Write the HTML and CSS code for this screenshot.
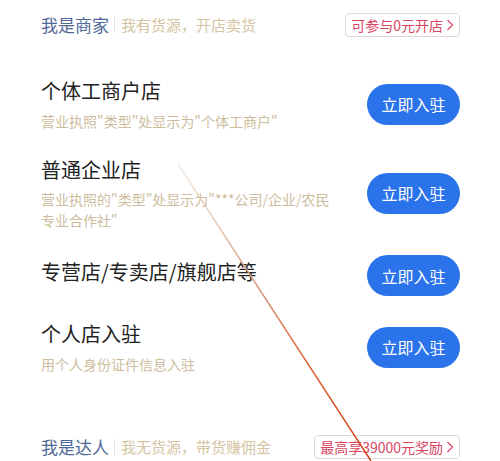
FILE: index.html
```html
<!DOCTYPE html>
<html lang="zh-CN">
<head>
<meta charset="utf-8">
<title>入驻</title>
<link rel="stylesheet" href="styles.css">
</head>
<body>
<div class="page">
  <div class="section-head">
    <div class="head-left">
      <span class="head-title">我是商家</span>
      <span class="head-sep"></span>
      <span class="head-sub">我有货源，开店卖货</span>
    </div>
    <div class="badge badge-shop">
      <span>可参与0元开店</span>
      <svg class="chev" width="8" height="12" viewBox="0 0 8 12"><polyline points="1.5,1 6.5,6 1.5,11" fill="none" stroke="#d9465f" stroke-width="1.2"/></svg>
    </div>
  </div>

  <div class="list">
    <div class="row">
      <div class="info">
        <div class="title">个体工商户店</div>
        <div class="desc">营业执照"类型"处显示为"个体工商户"</div>
      </div>
      <div class="btn">立即入驻</div>
    </div>
    <div class="row">
      <div class="info">
        <div class="title">普通企业店</div>
        <div class="desc">营业执照的"类型"处显示为"***公司/企业/农民专业合作社"</div>
      </div>
      <div class="btn">立即入驻</div>
    </div>
    <div class="row">
      <div class="info">
        <div class="title">专营店/专卖店/旗舰店等</div>
      </div>
      <div class="btn">立即入驻</div>
    </div>
    <div class="row">
      <div class="info">
        <div class="title">个人店入驻</div>
        <div class="desc">用个人身份证件信息入驻</div>
      </div>
      <div class="btn">立即入驻</div>
    </div>
  </div>

  <div class="section-head section-head-2">
    <div class="head-left">
      <span class="head-title">我是达人</span>
      <span class="head-sep"></span>
      <span class="head-sub">我无货源，带货赚佣金</span>
    </div>
    <div class="badge badge-talent">
      <span>最高享39000元奖励</span>
      <svg class="chev" width="8" height="12" viewBox="0 0 8 12"><polyline points="1.5,1 6.5,6 1.5,11" fill="none" stroke="#d9465f" stroke-width="1.2"/></svg>
    </div>
  </div>
</div>

<svg class="stroke-overlay" width="500" height="461" viewBox="0 0 500 461">
  <defs>
    <linearGradient id="lg" x1="178" y1="164" x2="371" y2="461" gradientUnits="userSpaceOnUse">
      <stop offset="0" stop-color="#e7d3c0" stop-opacity="0.5"/>
      <stop offset="0.35" stop-color="#d9a587"/>
      <stop offset="0.7" stop-color="#d65a2a"/>
      <stop offset="1" stop-color="#d33a0c"/>
    </linearGradient>
  </defs>
  <line x1="178" y1="164" x2="371" y2="461" stroke="url(#lg)" stroke-width="1.4"/>
</svg>
</body>
</html>
```
FILE: styles.css
```css
html, body {
  margin: 0;
  padding: 0;
  background: #ffffff;
}

body {
  position: relative;
  width: 500px;
  height: 461px;
  overflow: hidden;
  font-family: "Noto Sans CJK SC", "Noto Sans", sans-serif;
}

.page {
  padding: 0 40px 0 41px;
}

.section-head {
  display: flex;
  align-items: center;
  justify-content: space-between;
  height: 50px;
}

.section-head-2 {
  margin-top: 47px;
}

.head-left {
  display: flex;
  align-items: center;
}

.head-title {
  font-size: 17px;
  line-height: 24px;
  color: #4f6897;
}

.head-sep {
  width: 1px;
  height: 16px;
  background: #ebe2d2;
  margin: 0 6px 0 5px;
}

.head-sub {
  font-size: 15px;
  line-height: 22px;
  color: #d5c4a2;
}

.badge {
  display: flex;
  align-items: center;
  height: 22px;
  border: 1px solid #e2d6d6;
  border-radius: 4px;
  padding: 0 5px 0 5px;
  font-size: 14px;
  line-height: 20px;
  color: #d9465f;
}

.badge-talent {
  padding-left: 5px;
}

.chev {
  margin-left: 3px;
  display: block;
}

.list {
  padding-top: 27px;
  display: flex;
  flex-direction: column;
  gap: 24px;
}

.row {
  display: flex;
  align-items: center;
  justify-content: space-between;
}

.info {
  max-width: 292px;
}

.title {
  font-size: 20px;
  line-height: 28px;
  color: #222222;
  margin-bottom: 7px;
}

.desc {
  font-size: 14px;
  line-height: 21px;
  color: #cdbd9e;
  margin-top: -1.5px;
}

.btn {
  flex-shrink: 0;
  width: 93px;
  height: 41px;
  border-radius: 21px;
  background: #2b73ea;
  color: #ffffff;
  font-size: 16px;
  display: flex;
  align-items: center;
  justify-content: center;
}

.stroke-overlay {
  position: absolute;
  left: 0;
  top: 0;
  pointer-events: none;
}
```
